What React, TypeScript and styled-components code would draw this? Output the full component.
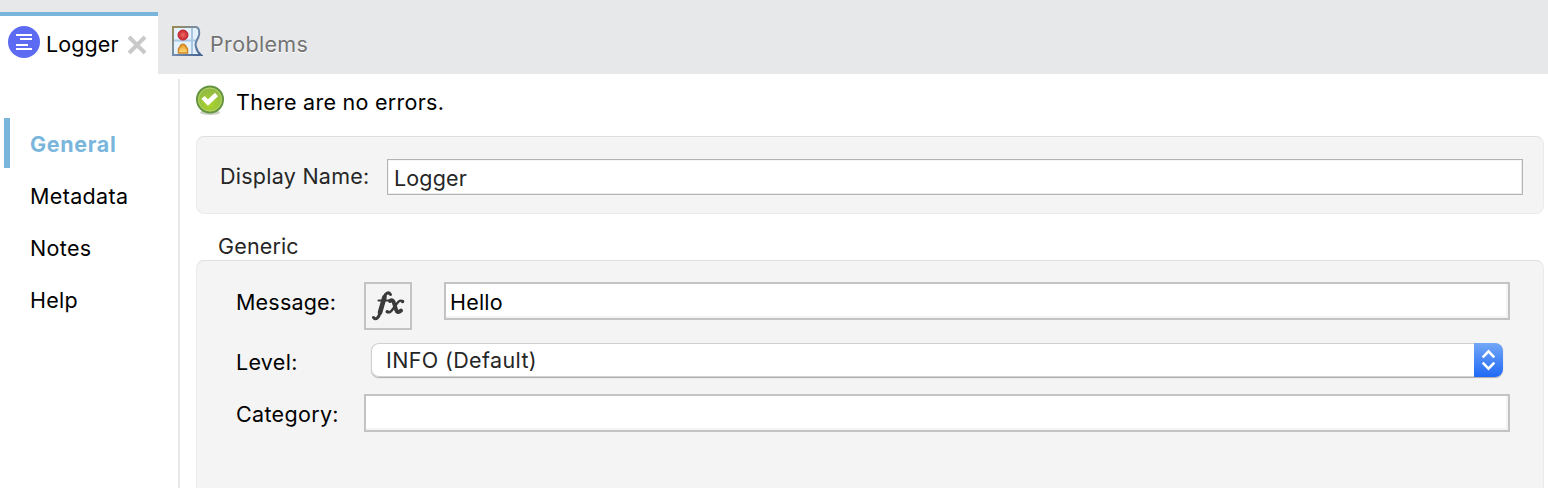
import React from "react";
import styled, { createGlobalStyle } from "styled-components";

const Global = createGlobalStyle`
  * { box-sizing: border-box; }
  body { margin: 0; background: #fff; overflow: hidden; }
`;

const Text = styled.span<{ $track?: number; $color?: string; $bold?: boolean }>`
  display: block;
  white-space: nowrap;
  line-height: 26px;
  font-weight: ${(p) => (p.$bold ? 700 : 400)};
  color: ${(p) => p.$color ?? "#000"};
  letter-spacing: ${(p) => p.$track ?? 0}px;
`;

const Page = styled.div`
  width: 1548px;
  height: 488px;
  display: flex;
  flex-direction: column;
  font-family: Inter, "Liberation Sans", sans-serif;
  font-size: 21.5px;
  overflow: hidden;
`;

const TabBar = styled.header`
  height: 74px;
  flex: none;
  display: flex;
  align-items: flex-end;
  background: #e7e8ea;
`;

const ActiveTab = styled.div`
  width: 158px;
  height: 62px;
  border-top: 4px solid #7ab6dc;
  background: #fff;
  display: flex;
  align-items: flex-start;
  padding: 10px 0 0 8px;

  ${Text} { width: 80px; margin: 5px 0 0 6px; }
  svg:last-child { margin-top: 8px; }
  svg { flex: none; }
`;

const Tab = styled.div`
  height: 62px;
  display: flex;
  align-items: flex-start;
  padding: 13px 0 0 14px;

  ${Text} { margin: 6px 0 0 7px; text-shadow: 0 1px 0 #fff; }
`;

const Body = styled.div`
  flex: 1;
  display: flex;
  min-height: 0;
`;

const Sidebar = styled.nav`
  width: 180px;
  flex: none;
  margin-top: 5px;
  padding: 39px 0 0 4px;
  border-right: 2px solid #e8e8e8;
  display: flex;
  flex-direction: column;
  gap: 2px;
`;

const NavItem = styled.div<{ $active?: boolean }>`
  height: 50px;
  padding: 13px 0 0 20px;
  border-left: 6px solid ${(p) => (p.$active ? "#7ab6dc" : "transparent")};
`;

const Main = styled.main`
  flex: 1;
  padding: 10px 4px 0 16px;
  display: flex;
  flex-direction: column;
`;

const Status = styled.div`
  height: 52px;
  display: flex;
  align-items: flex-start;

  ${Text} { margin: 5px 0 0 11px; }
  svg { flex: none; }
`;

const Panel = styled.section`
  border: 1px solid #ebebeb;
  border-top-color: #dfdfdf;
  border-radius: 8px;
  background: #f4f4f4;
`;

const NamePanel = styled(Panel)`
  height: 78px;
  padding: 22px 20px 0 23px;
  display: flex;
  align-items: flex-start;

  > ${Text} { width: 167px; margin-top: 4px; }
`;

const NameField = styled.div`
  flex: 1;
  height: 36px;
  padding: 5px 6px 0;
  border: 1px solid #b4b4b4;
  background: #fff;
  box-shadow: inset -1px -1px 0 #ebebeb, inset 1px 1px 0 #f4f4f4;
`;

const GroupTitle = styled.div`
  height: 46px;
  padding: 19px 0 0 22px;
`;

const GenericPanel = styled(Panel)`
  flex: 1;
  border-bottom: 0;
  border-radius: 8px 8px 0 0;
  padding: 21px 33px 0 39px;
`;

const Row = styled.div<{ $height: number; $labelTop: number }>`
  height: ${(p) => p.$height}px;
  display: flex;
  align-items: flex-start;

  > ${Text} { width: 128px; flex: none; margin-top: ${(p) => p.$labelTop}px; }
`;

const FxButton = styled.div`
  width: 48px;
  height: 48px;
  flex: none;
  margin-right: 32px;
  border: 2px solid #c3c3c3;
  display: flex;
`;

const Field = styled.div`
  flex: 1;
  height: 38px;
  padding: 5px 4px 0;
  border: 2px solid #c3c3c3;
  background: #fff;
  box-shadow: inset -2px -2px 0 #f4f4f4;
`;

const Select = styled.div`
  flex: 1;
  height: 34px;
  margin: 0 7px;
  display: flex;
  justify-content: space-between;
  border-radius: 8px;
  background: #fff;
  box-shadow: 0 0 0 1px #d0d0d0 inset, 0 1px 1px #aaa;
  overflow: hidden;

  ${Text} { margin: 4px 0 0 15px; }
`;

const Stepper = styled.div`
  width: 29px;
  height: 34px;
  background: linear-gradient(#73a7f7, #1f69f6);
`;

const LoggerIcon = () => (
  <svg width="32" height="32" viewBox="0 0 32 32">
    <circle cx="16" cy="16" r="16" fill="#5d6bf2" />
    <path d="M8 9h16M12 13h12M8 19h12M8 23h16" stroke="#fff" strokeWidth="2" />
  </svg>
);

const CloseIcon = () => (
  <svg width="22" height="22" viewBox="0 0 22 22">
    <path d="M3 3l16 16M19 3L3 19" stroke="#c9c9c9" strokeWidth="4" />
  </svg>
);

const ProblemsIcon = () => (
  <svg width="31" height="31" viewBox="0 0 31 31">
    <defs>
      <linearGradient id="edge" x1="0" y1="0" x2="1" y2="1">
        <stop offset="0" stopColor="#9a8b52" />
        <stop offset=".5" stopColor="#728cae" />
        <stop offset="1" stopColor="#486693" />
      </linearGradient>
      <linearGradient id="amber" x1="0" y1="0" x2="0" y2="1">
        <stop offset="0" stopColor="#e49b2c" />
        <stop offset="1" stopColor="#ffdf78" />
      </linearGradient>
      <radialGradient id="red">
        <stop offset="0" stopColor="#ee6b62" />
        <stop offset="1" stopColor="#c9252d" />
      </radialGradient>
    </defs>
    <path d="M1 2H24Q28 3 27 10C26 15 22 17 24 22Q25 27 29 30H1Z" fill="#e5f2fc" />
    <path d="M2 15.500H24M20 2V29" stroke="#a9c6e5" strokeWidth="2" />
    <path d="M1 2H24Q28 3 27 10C26 15 22 17 24 22Q25 27 29 30H1Z" fill="none" stroke="url(#edge)" strokeWidth="2" />
    <circle cx="11" cy="10" r="5" fill="url(#red)" stroke="#bd2730" />
    <path d="M6.500 28V24L9 20Q11 18.500 13 20L15.500 24V28Z" fill="url(#amber)" stroke="#cf8427" strokeWidth="1.500" />
  </svg>
);

const CheckIcon = () => (
  <svg width="29" height="32" viewBox="0 0 29 32">
    <defs>
      <radialGradient id="green" cx=".5" cy=".7" r=".7">
        <stop offset="0" stopColor="#a9d42c" />
        <stop offset="1" stopColor="#8db548" />
      </radialGradient>
    </defs>
    <ellipse cx="14" cy="28.500" rx="10" ry="2.500" fill="#c9cfc4" />
    <circle cx="14" cy="15.500" r="13" fill="url(#green)" stroke="#64943f" strokeWidth="2" />
    <circle cx="14" cy="15.500" r="11.500" fill="none" stroke="#b5d56c" strokeWidth="1" />
    <path d="M7 13.500L12 18.500L20.500 10.500" fill="none" stroke="#fff" strokeWidth="4.500" />
  </svg>
);

const FxIcon = () => (
  <svg width="44" height="44" viewBox="0 0 44 44" fill="none" stroke="#3a3a3a" strokeLinecap="round">
    <path d="M24.500 10.500C22.500 7.500 19.500 9 18.300 13L14 29C12.800 33.500 10 36.500 7.500 33.500" strokeWidth="3" />
    <path d="M18.500 13L14 28.500" strokeWidth="4.600" />
    <path d="M12.500 16.500H23" strokeWidth="2" />
    <path d="M24 17Q27 15 28 19L30 25.500Q31.300 30 35 26.500" strokeWidth="4" />
    <path d="M36 17Q33.500 15.500 30.500 20L26.500 25.500Q23.500 30 21 27.500" strokeWidth="2.400" />
    <path d="M36.500 17.500h.1M21.300 27.700h.1" strokeWidth="3.500" />
  </svg>
);

const ArrowsIcon = () => (
  <svg width="29" height="34" viewBox="0 0 29 34">
    <path d="M8.700 14.300L14.500 8.300L20.300 14.300M8.700 19.700L14.500 25.700L20.300 19.700" fill="none" stroke="#fff" strokeWidth="2.600" />
  </svg>
);

export default function App() {
  return (
    <Page>
      <Global />
      <TabBar>
        <ActiveTab>
          <LoggerIcon />
          <Text $track={0.1}>Logger</Text>
          <CloseIcon />
        </ActiveTab>
        <Tab>
          <ProblemsIcon />
          <Text $track={0.35} $color="#737373">Problems</Text>
        </Tab>
      </TabBar>
      <Body>
        <Sidebar>
          <NavItem $active><Text $bold $track={0.65} $color="#7ab6dc">General</Text></NavItem>
          <NavItem><Text $track={0.35}>Metadata</Text></NavItem>
          <NavItem><Text $track={0.35}>Notes</Text></NavItem>
          <NavItem><Text $track={0.3}>Help</Text></NavItem>
        </Sidebar>
        <Main>
          <Status>
            <CheckIcon />
            <Text $track={0.27}>There are no errors.</Text>
          </Status>
          <NamePanel>
            <Text $track={0.26} $color="#262626">Display Name:</Text>
            <NameField><Text $track={0.15} $color="#262626">Logger</Text></NameField>
          </NamePanel>
          <GroupTitle><Text $track={0.15} $color="#262626">Generic</Text></GroupTitle>
          <GenericPanel>
            <Row $height={61} $labelTop={7}>
              <Text $track={0.2}>Message:</Text>
              <FxButton><FxIcon /></FxButton>
              <Field><Text $track={0.2}>Hello</Text></Field>
            </Row>
            <Row $height={51} $labelTop={6}>
              <Text $track={0.3}>Level:</Text>
              <Select>
                <Text $track={0.37} $color="#262626">INFO (Default)</Text>
                <Stepper><ArrowsIcon /></Stepper>
              </Select>
            </Row>
            <Row $height={38} $labelTop={7}>
              <Text $track={0.33}>Category:</Text>
              <Field />
            </Row>
          </GenericPanel>
        </Main>
      </Body>
    </Page>
  );
}
